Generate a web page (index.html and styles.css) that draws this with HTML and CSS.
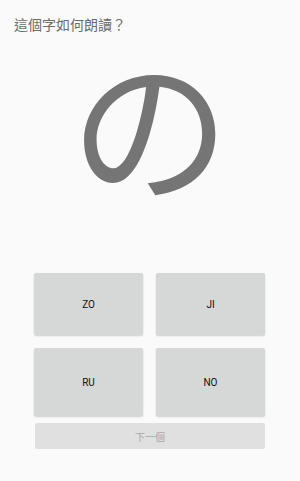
FILE: index.html
```html
<!DOCTYPE html>
<html>
<head>
  <meta charset="utf-8">
  <link rel="stylesheet" href="styles.css">
</head>
<body>

  <!-- Question -->
  <div class="question">這個字如何朗讀？</div>

  <!-- The kana to read -->
  <div class="kana">の</div>

  <!-- Answer choices -->
  <div class="choices">
    <button class="choice choice-top">ZO</button>
    <button class="choice choice-top">JI</button>
    <button class="choice choice-bottom">RU</button>
    <button class="choice choice-bottom">NO</button>
  </div>

  <button class="next-button" disabled>下一個</button>

</body>
</html>
```

FILE: styles.css
```css
body {
  margin: 0;
  background: #fafafa;
  font-family: Roboto, "Noto Sans CJK TC", sans-serif;
  width: 300px;
  height: 481px;
  overflow: hidden;
}

/* Question line at the top */
.question {
  padding: 16px 0 0 14px;
  font-size: 14px;
  line-height: 18px;
  color: #6b6b6b;
}

/* Big kana in the middle */
.kana {
  height: 233px;
  padding-top: 6px;
  font-family: "Noto Sans CJK JP", sans-serif;
  font-size: 160px;
  line-height: 160px;
  text-align: center;
  color: #757575;
}

/* 2x2 grid of answers */
.choices {
  display: grid;
  grid-template-columns: 1fr 1fr;
  column-gap: 13px;
  row-gap: 13px;
  margin: 0 35px 0 34px;
}

.choice {
  background: #d6d7d7;
  border: none;
  border-radius: 2px;
  box-shadow: 0 1px 2px rgba(0, 0, 0, 0.18);
  font-family: Roboto, sans-serif;
  font-size: 10px;
  color: #111;
  padding: 0;
}

.choice-top {
  height: 62px;
}

.choice-bottom {
  height: 68px;
}

/* Disabled "next" button */
.next-button {
  display: block;
  width: 230px;
  height: 26px;
  margin: 7px 0 0 35px;
  background: #e0e0e0;
  border: none;
  border-radius: 2px;
  font-family: "Noto Sans CJK TC", sans-serif;
  font-size: 10px;
  color: #a8a8a8;
  padding: 0;
}
```
